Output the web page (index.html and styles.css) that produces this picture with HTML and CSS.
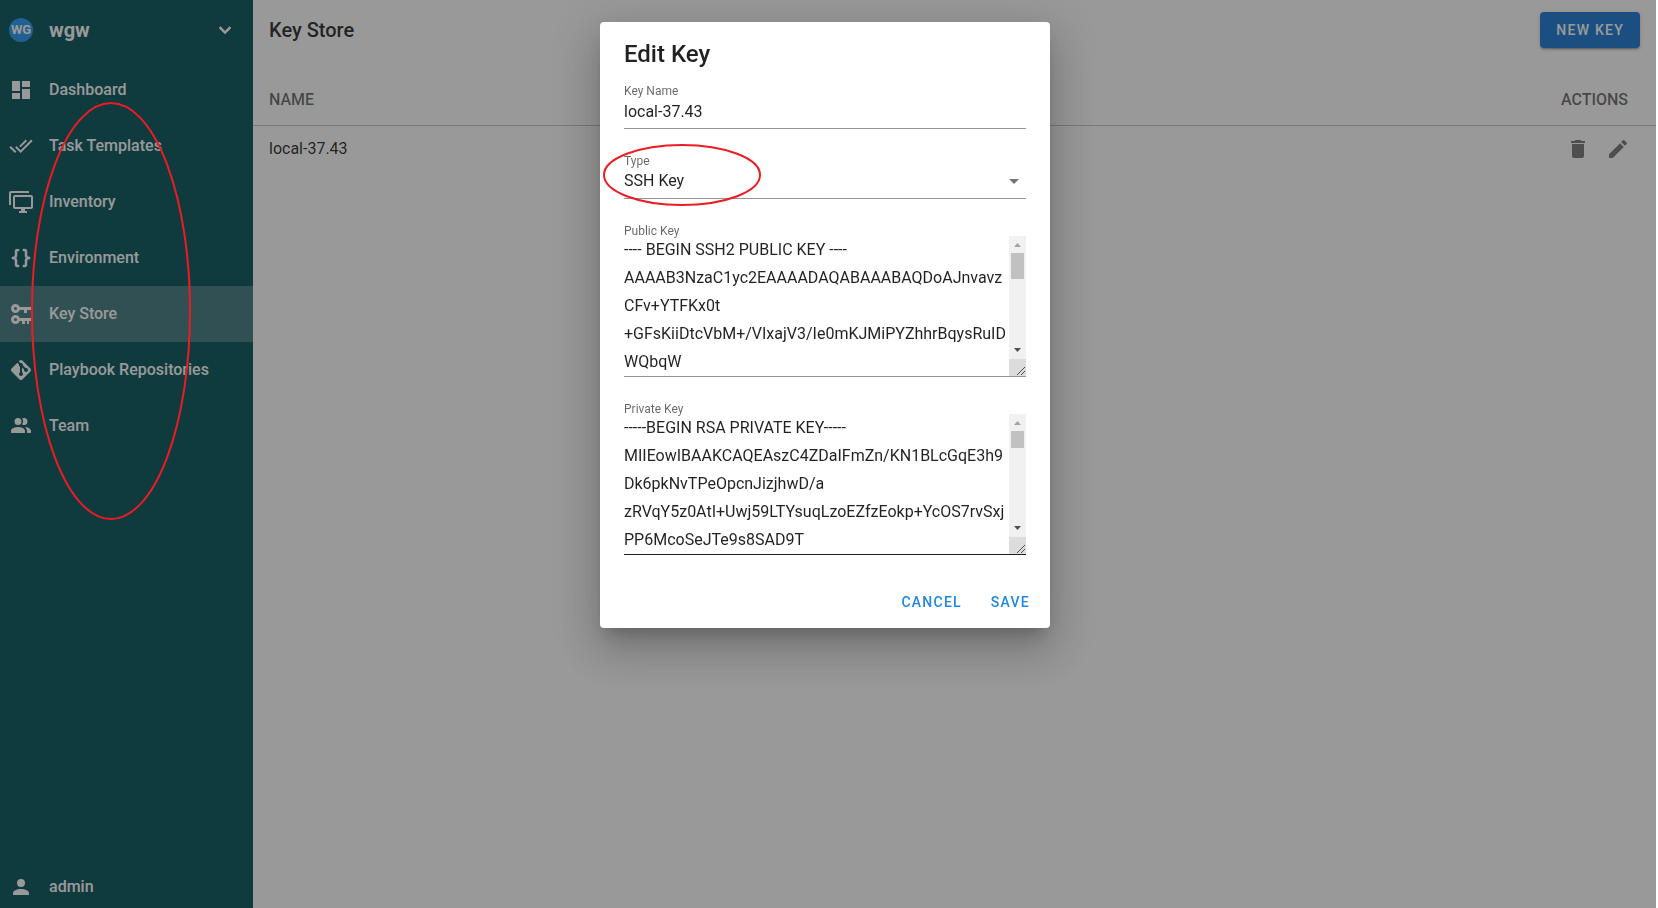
FILE: index.html
```html
<!DOCTYPE html>
<html lang="en">
<head>
<meta charset="utf-8">
<title>Key Store</title>
<link rel="stylesheet" href="styles.css">
</head>
<body>
<div class="app">
  <aside class="sidebar">
    <button class="project" type="button">
      <span class="avatar">WG</span>
      <span class="project-name">wgw</span>
      <svg class="icon" viewBox="0 0 24 24"><path d="M7.41,8.58L12,13.17L16.59,8.58L18,10L12,16L6,10L7.41,8.58Z" stroke="currentColor" stroke-width=".6"/></svg>
    </button>
    <nav class="nav">
      <a class="nav-item" href="#dashboard"><svg class="icon" viewBox="0 0 24 24"><path d="M13,3V9H21V3M13,21H21V11H13M3,21H11V15H3M3,13H11V3H3V13Z"/></svg>Dashboard</a>
      <a class="nav-item" href="#templates"><svg class="icon" viewBox="0 0 24 24"><path d="M0.41,13.41L6,19L7.41,17.58L1.83,12M22.24,5.58L11.66,16.17L7.5,12L6.07,13.41L11.66,19L23.66,7M18,7L16.59,5.58L10.24,11.93L11.66,13.34L18,7Z"/></svg>Task Templates</a>
      <a class="nav-item" href="#inventory"><svg class="icon wide" viewBox="0 0 24 24"><path d="M22,17V7H6V17H22M22,5A2,2 0 0,1 24,7V17C24,18.11 23.1,19 22,19H16V21H18V23H10V21H12V19H6C4.89,19 4,18.11 4,17V7A2,2 0 0,1 6,5H22M2,3V15H0V3A2,2 0 0,1 2,1H20V3H2Z"/></svg>Inventory</a>
      <a class="nav-item" href="#environment"><svg class="icon" viewBox="0 0 24 24"><path stroke="currentColor" stroke-width=".5" d="M8,3A2,2 0 0,0 6,5V9A2,2 0 0,1 4,11H3V13H4A2,2 0 0,1 6,15V19A2,2 0 0,0 8,21H10V19H8V14A2,2 0 0,0 6,12A2,2 0 0,0 8,10V5H10V3M16,3A2,2 0 0,1 18,5V9A2,2 0 0,0 20,11H21V13H20A2,2 0 0,0 18,15V19A2,2 0 0,1 16,21H14V19H16V14A2,2 0 0,1 18,12A2,2 0 0,1 16,10V5H14V3H16Z"/></svg>Environment</a>
      <a class="nav-item active" href="#keys"><svg class="icon" viewBox="0 0 24 24"><path d="M6.5,2C8.46,2 10.13,3.25 10.74,5H22V8H18V11H15V8H10.74C10.13,9.75 8.46,11 6.5,11C4,11 2,9 2,6.5C2,4 4,2 6.5,2M6.5,5A1.5,1.5 0 0,0 5,6.5A1.5,1.5 0 0,0 6.5,8A1.5,1.5 0 0,0 8,6.5A1.5,1.5 0 0,0 6.5,5M6.5,13C8.46,13 10.13,14.25 10.74,16H22V19H20V22H18V19H16V22H13V19H10.74C10.13,20.75 8.46,22 6.5,22C4,22 2,20 2,17.5C2,15 4,13 6.5,13M6.5,16A1.5,1.5 0 0,0 5,17.5A1.5,1.5 0 0,0 6.5,19A1.5,1.5 0 0,0 8,17.5A1.5,1.5 0 0,0 6.5,16Z"/></svg>Key Store</a>
      <a class="nav-item" href="#repositories"><svg class="icon" viewBox="0 0 24 24"><path d="M2.6,10.59L8.38,4.8L10.07,6.5C9.83,7.35 10.22,8.28 11,8.73V14.27C10.4,14.61 10,15.26 10,16A2,2 0 0,0 12,18A2,2 0 0,0 14,16C14,15.26 13.6,14.61 13,14.27V9.41L15.07,11.5C15,11.65 15,11.82 15,12A2,2 0 0,0 17,14A2,2 0 0,0 19,12A2,2 0 0,0 17,10C16.82,10 16.65,10 16.5,10.07L13.93,7.5C14.19,6.57 13.71,5.55 12.78,5.16C12.35,5 11.9,4.96 11.5,5.07L9.8,3.38L10.59,2.6C11.37,1.81 12.63,1.81 13.41,2.6L21.4,10.59C22.19,11.37 22.19,12.63 21.4,13.41L13.41,21.4C12.63,22.19 11.37,22.19 10.59,21.4L2.6,13.41C1.81,12.63 1.81,11.37 2.6,10.59Z"/></svg>Playbook Repositories</a>
      <a class="nav-item" href="#team"><svg class="icon" viewBox="0 0 24 24"><path d="M16 17V19H2V17S2 13 9 13 16 17 16 17M12.5 7.5A3.5 3.5 0 1 0 9 11A3.5 3.5 0 0 0 12.5 7.5M15.94 13A5.32 5.32 0 0 1 18 17V19H22V17S22 13.37 15.94 13M15 4A3.39 3.39 0 0 0 13.07 4.59A5 5 0 0 1 13.07 10.41A3.39 3.39 0 0 0 15 11A3.5 3.5 0 0 0 15 4Z"/></svg>Team</a>
    </nav>
    <a class="nav-item user" href="#account"><svg class="icon" viewBox="0 0 24 24"><path d="M12,4A4,4 0 0,1 16,8A4,4 0 0,1 12,12A4,4 0 0,1 8,8A4,4 0 0,1 12,4M12,14C16.42,14 20,15.79 20,18V20H4V18C4,15.79 7.58,14 12,14Z"/></svg>admin</a>
  </aside>
  <main class="main">
    <header class="toolbar">
      <h1 class="page-title">Key Store</h1>
      <button class="new-key" type="button">NEW KEY</button>
    </header>
    <table class="keys">
      <thead><tr><th>NAME</th><th class="actions">ACTIONS</th></tr></thead>
      <tbody><tr><td>local-37.43</td><td class="actions">
        <div class="row-actions">
          <button class="icon-button" type="button" aria-label="Delete"><svg class="icon" viewBox="0 0 24 24"><path d="M19,4H15.5L14.5,3H9.5L8.5,4H5V6H19M6,19A2,2 0 0,0 8,21H16A2,2 0 0,0 18,19V7H6V19Z"/></svg></button>
          <button class="icon-button" type="button" aria-label="Edit"><svg class="icon" viewBox="0 0 24 24"><path d="M20.71,7.04C21.1,6.65 21.1,6 20.71,5.63L18.37,3.29C18,2.9 17.35,2.9 16.96,3.29L15.12,5.12L18.87,8.87M3,17.25V21H6.75L17.81,9.93L14.06,6.18L3,17.25Z"/></svg></button>
        </div>
      </td></tr></tbody>
    </table>
  </main>
</div>
<div class="overlay">
  <form class="dialog" role="dialog" aria-labelledby="dialog-title">
    <h2 class="dialog-title" id="dialog-title">Edit Key</h2>
    <div class="fields">
      <div class="field">
        <label for="key-name">Key Name</label>
        <input class="control" id="key-name" type="text" value="local-37.43">
      </div>
      <div class="field">
        <label for="key-type">Type</label>
        <div class="select-box">
          <select class="control" id="key-type"><option>SSH Key</option></select>
          <svg class="icon caret" viewBox="0 0 24 24"><path d="M7,10L12,15L17,10H7Z"/></svg>
        </div>
      </div>
      <div class="field area-field">
        <label for="public-key">Public Key</label>
        <div class="area-box">
          <textarea class="area" id="public-key" rows="5" spellcheck="false">---- BEGIN SSH2 PUBLIC KEY ----
AAAAB3NzaC1yc2EAAAADAQABAAABAQDoAJnvavz
CFv+YTFKx0t
+GFsKiiDtcVbM+/VIxajV3/Ie0mKJMiPYZhhrBqysRuID
WQbqW</textarea>
          <div class="scroll" aria-hidden="true">
            <svg class="scroll-arrow dim" viewBox="0 0 17 17"><path d="M5 11L8.500 7L12 11Z"/></svg>
            <div class="thumb"></div>
            <svg class="scroll-arrow" viewBox="0 0 17 17"><path d="M5 6L8.500 10L12 6Z"/></svg>
            <svg class="grip" viewBox="0 0 17 17"><path d="M8 16L16 8M12 16L16 12"/></svg>
          </div>
        </div>
      </div>
      <div class="field area-field">
        <label for="private-key">Private Key</label>
        <div class="area-box hovered">
          <textarea class="area" id="private-key" rows="5" spellcheck="false">-----BEGIN RSA PRIVATE KEY-----
MIIEowIBAAKCAQEAszC4ZDaIFmZn/KN1BLcGqE3h9
Dk6pkNvTPeOpcnJizjhwD/a
zRVqY5z0AtI+Uwj59LTYsuqLzoEZfzEokp+YcOS7rvSxj
PP6McoSeJTe9s8SAD9T</textarea>
          <div class="scroll" aria-hidden="true">
            <svg class="scroll-arrow dim" viewBox="0 0 17 17"><path d="M5 11L8.500 7L12 11Z"/></svg>
            <div class="thumb short"></div>
            <svg class="scroll-arrow" viewBox="0 0 17 17"><path d="M5 6L8.500 10L12 6Z"/></svg>
            <svg class="grip" viewBox="0 0 17 17"><path d="M8 16L16 8M12 16L16 12"/></svg>
          </div>
        </div>
      </div>
    </div>
    <div class="dialog-actions">
      <button class="text-button" type="button">CANCEL</button>
      <button class="text-button" type="button">SAVE</button>
    </div>
  </form>
</div>
<svg class="mark mark-nav" viewBox="0 0 160 418" aria-hidden="true"><ellipse cx="80" cy="209" rx="79" ry="208"/></svg>
<svg class="mark mark-type" viewBox="0 0 158 62" aria-hidden="true"><ellipse cx="79" cy="31" rx="78" ry="30"/></svg>
</body>
</html>
```
FILE: styles.css
```css
* { box-sizing: border-box; }
body {
  margin: 0;
  font-family: Roboto, sans-serif;
  font-size: 16px;
  line-height: 24px;
  color: rgba(0, 0, 0, .87);
  background: #fff;
}
button, input, select, textarea { font: inherit; color: inherit; border: 0; border-radius: 0; background: none; padding: 0; margin: 0; outline: 0; }
.icon { width: 24px; height: 24px; fill: currentColor; flex: none; display: block; }
.icon.wide { overflow: visible; }

.app { display: flex; min-height: 100vh; }
.sidebar { width: 253px; flex: none; display: flex; flex-direction: column; background: #005057; color: #fff; }
.project { display: flex; align-items: center; height: 60px; padding: 0 16px 0 9px; text-align: left; }
.avatar { width: 24px; height: 24px; border-radius: 50%; background: #2196f3; font-size: 13px; font-weight: 700; text-align: center; margin-right: 16px; }
.project-name { flex: 1; font-size: 20px; font-weight: 700; }
.nav { padding-top: 2px; flex: 1; }
.nav-item { display: flex; align-items: center; gap: 16px; height: 56px; padding: 0 9px; color: #fff; text-decoration: none; font-weight: 500; }
.nav-item.active { background: rgba(255, 255, 255, .24); }
.nav-item.user { height: 42px; }

.main { flex: 1; margin-right: 2px; }
.toolbar { display: flex; align-items: center; justify-content: space-between; height: 60px; padding: 0 16px; }
.page-title { margin: 0; font-size: 20px; font-weight: 500; }
.new-key { height: 36px; padding: 0 16px; border-radius: 4px; background: #1976d2; color: #fff; font-size: 14px; font-weight: 500; letter-spacing: 1.25px; box-shadow: 0 3px 1px -2px rgba(0, 0, 0, .2), 0 2px 2px rgba(0, 0, 0, .14), 0 1px 5px rgba(0, 0, 0, .12); }
.keys { width: 100%; margin-top: 16px; border-collapse: collapse; }
.keys th { height: 49px; padding: 0 16px; text-align: left; font-weight: 500; color: rgba(0, 0, 0, .6); border-bottom: 1px solid rgba(0, 0, 0, .12); }
.keys td { height: 48px; padding: 0 16px; }
.keys th.actions { text-align: right; padding-right: 28px; }
.keys td.actions { padding-right: 26px; }
.row-actions { display: flex; justify-content: flex-end; gap: 16px; }
.icon-button { color: rgba(0, 0, 0, .54); }

.overlay { position: fixed; inset: 0 2px 0 0; display: flex; justify-content: center; align-items: flex-start; padding: 22px 8px; background: rgba(33, 33, 33, .46); }
.dialog { width: 450px; margin-right: 6px; padding: 16px 24px 8px; border-radius: 4px; background: #fff; box-shadow: 0 11px 15px -7px rgba(0, 0, 0, .2), 0 24px 38px 3px rgba(0, 0, 0, .14), 0 9px 46px 8px rgba(0, 0, 0, .12); }
.dialog-title { margin: 0; font-size: 24px; line-height: 32px; font-weight: 500; }
.fields { display: flex; flex-direction: column; gap: 24px; margin-top: 13px; }
.field { display: flex; flex-direction: column; }
.field label { font-size: 12px; line-height: 16px; color: rgba(0, 0, 0, .6); }
.control { display: block; width: 100%; height: 30px; padding-bottom: 5px; border-bottom: 1px solid rgba(0, 0, 0, .42); appearance: none; }
.select-box { position: relative; }
.caret { position: absolute; right: 0; top: 0; color: rgba(0, 0, 0, .54); }
.area-field label { margin-bottom: -3px; }
.area-box { display: flex; border-bottom: 1px solid rgba(0, 0, 0, .42); }
.area-box.hovered { border-color: rgba(0, 0, 0, .87); }
.area { flex: 1; min-width: 0; height: 140px; line-height: 28px; resize: none; overflow: hidden; white-space: pre; }
.scroll { width: 17px; flex: none; display: flex; flex-direction: column; background: #f1f1f1; }
.scroll-arrow { width: 17px; height: 17px; fill: #505050; }
.scroll-arrow.dim { fill: #a3a3a3; }
.thumb { height: 26px; margin: 0 2px auto; background: #c1c1c1; }
.thumb.short { height: 17px; }
.grip { width: 17px; height: 17px; background: #dcdcdc; stroke: #505050; fill: none; }
.dialog-actions { display: flex; justify-content: flex-end; gap: 5px; margin: 29px -16px 0 0; }
.text-button { height: 36px; padding: 0 12px; color: #1e88e5; font-size: 14px; font-weight: 500; letter-spacing: 1.25px; }

.mark { position: fixed; fill: none; stroke: #ed1c24; stroke-width: 2; pointer-events: none; }
.mark-nav { left: 31px; top: 102px; width: 160px; height: 418px; }
.mark-type { left: 603px; top: 144px; width: 158px; height: 62px; }
```
